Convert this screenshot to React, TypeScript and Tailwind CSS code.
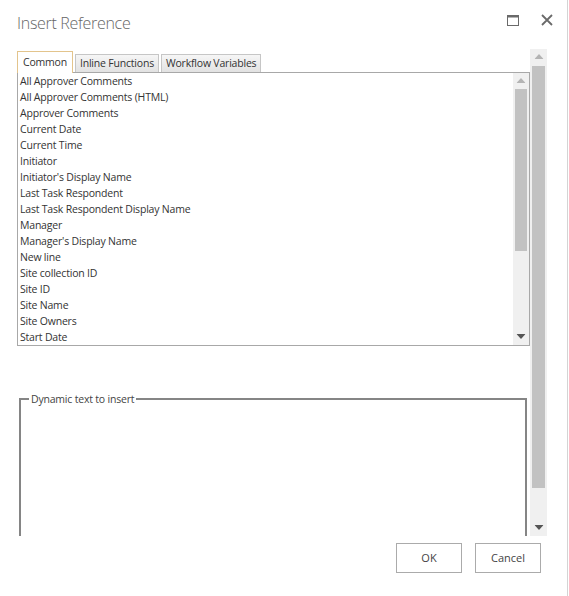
import React from "react";

const fields = [
  "All Approver Comments",
  "All Approver Comments (HTML)",
  "Approver Comments",
  "Current Date",
  "Current Time",
  "Initiator",
  "Initiator's Display Name",
  "Last Task Respondent",
  "Last Task Respondent Display Name",
  "Manager",
  "Manager's Display Name",
  "New line",
  "Site collection ID",
  "Site ID",
  "Site Name",
  "Site Owners",
  "Start Date",
];

const tabs = ["Common", "Inline Functions", "Workflow Variables"];

// fake scrollbar, drawn so it looks the same in every browser
const ScrollBar: React.FC<{ thumbTop: number; thumbHeight: number; className?: string }> = ({
  thumbTop,
  thumbHeight,
  className,
}) => (
  <div className={`relative bg-[#f0f0f0] ${className ?? ""}`}>
    <svg className="absolute left-1/2 top-[5px] -translate-x-1/2" width="9" height="5" viewBox="0 0 9 5">
      <path d="M0 5 L4.5 0 L9 5 Z" fill="#b4b4b4" />
    </svg>
    <div
      className="absolute left-[2px] right-[2px] bg-[#c2c2c2]"
      style={{ top: thumbTop, height: thumbHeight }}
    />
    <svg className="absolute left-1/2 bottom-[6px] -translate-x-1/2" width="9" height="5" viewBox="0 0 9 5">
      <path d="M0 0 L9 0 L4.5 5 Z" fill="#555" />
    </svg>
  </div>
);

export default function App() {
  return (
    <div className="w-[569px] h-[596px] bg-white overflow-hidden font-['Open_Sans',sans-serif] text-[#444]">
      <div className="w-[568px] h-[596px] border-r border-[#d4d4d4] flex flex-col">
        {/* header */}
        <div className="h-[49px] flex items-start pl-[17px] pr-[14px] pt-[10px]">
          <h1 className="text-[16px] font-light text-[#666] leading-[26px] tracking-[-0.3px]">Insert Reference</h1>
          <div className="ml-auto flex items-center gap-[22px] pt-[4px]">
            <svg width="12" height="11" viewBox="0 0 12 11">
              <rect x="0.5" y="0.5" width="11" height="10" fill="none" stroke="#6a6a6a" />
              <rect x="0" y="0" width="12" height="2.5" fill="#6a6a6a" />
            </svg>
            <svg width="12" height="12" viewBox="0 0 12 12">
              <path d="M1 1 L11 11 M11 1 L1 11" stroke="#6a6a6a" strokeWidth="1.8" />
            </svg>
          </div>
        </div>

        {/* scrolling body */}
        <div className="h-[487px] flex">
          <div className="w-[530px] overflow-hidden pl-[17px] pt-[2px]">
            <div className="flex items-end h-[21px] text-[10.5px] tracking-[-0.2px] leading-none">
              {tabs.map((t, i) =>
                i === 0 ? (
                  <div
                    key={t}
                    className="h-[22px] -mb-px relative z-10 px-[5px] flex items-center bg-white border border-b-0 border-[#e3c48c] text-[#333]"
                  >
                    {t}
                  </div>
                ) : (
                  <div
                    key={t}
                    className="h-[18px] ml-[2px] px-[4px] flex items-center bg-gradient-to-b from-[#f6f6f6] to-[#e2e2e2] border border-b-0 border-[#c6c6c6] text-[#333]"
                  >
                    {t}
                  </div>
                )
              )}
            </div>

            {/* field list */}
            <div className="w-[513px] h-[274px] border border-[#a8a8a8] flex">
              <ul className="flex-1 text-[10.5px] tracking-[-0.2px] leading-[16px] text-[#333] pl-[2px]">
                {fields.map((f) => (
                  <li key={f} className="h-[16px] whitespace-nowrap">
                    {f}
                  </li>
                ))}
              </ul>
              <ScrollBar className="w-[16px] h-full" thumbTop={16} thumbHeight={162} />
            </div>

            <fieldset className="mt-[46px] ml-[2px] w-[508px] h-[220px] border-2 border-[#858585] px-[8px]">
              <legend className="px-[2px] text-[10.5px] tracking-[-0.2px] leading-[14px] text-[#444]">
                Dynamic text to insert
              </legend>
            </fieldset>
          </div>
          <ScrollBar className="w-[17px] h-full" thumbTop={17} thumbHeight={422} />
        </div>

        {/* footer */}
        <div className="flex justify-end gap-[13px] pr-[26px] pt-[7px]">
          <button className="w-[66px] h-[30px] border border-[#ababab] bg-white text-[11px] text-[#444]">OK</button>
          <button className="w-[66px] h-[30px] border border-[#ababab] bg-white text-[11px] text-[#444]">Cancel</button>
        </div>
      </div>
    </div>
  );
}
